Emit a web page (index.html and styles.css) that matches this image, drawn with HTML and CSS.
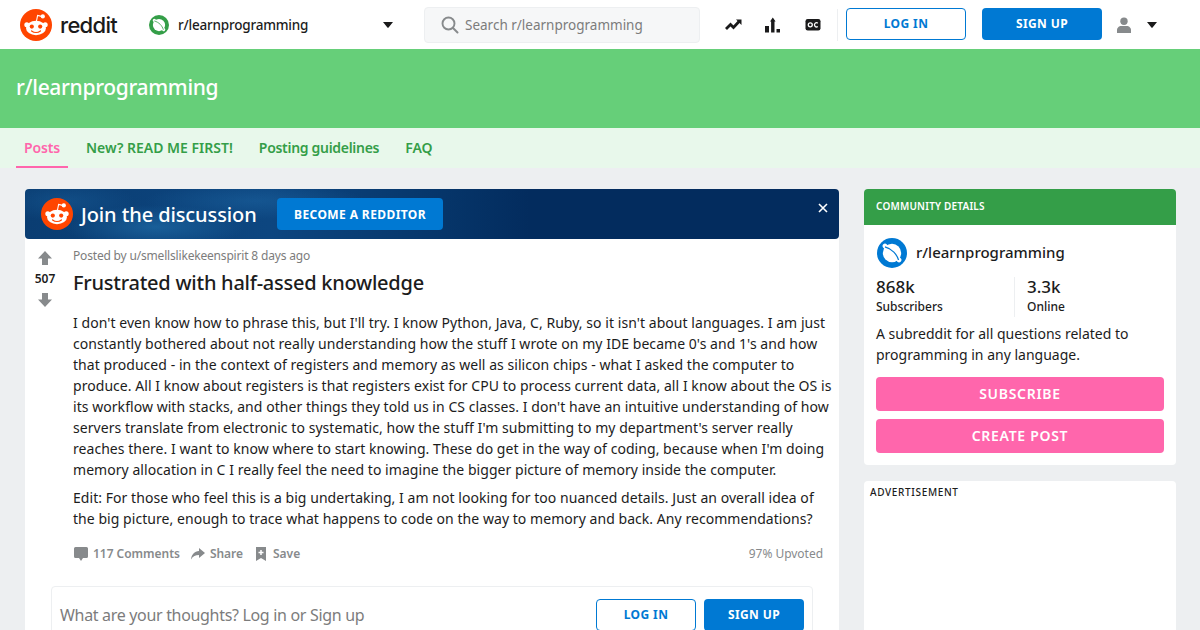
FILE: index.html
```html
<!DOCTYPE html>
<html lang="en">
<head>
<meta charset="utf-8">
<title>r/learnprogramming</title>
<link rel="stylesheet" href="styles.css">
</head>
<body>
<svg class="defs" width="0" height="0">
  <defs>
    <symbol id="snoo" viewBox="0 0 32 32">
      <circle cx="16" cy="16" r="16" fill="#ff4500"/>
      <circle cx="22.800" cy="7.400" r="2.100" fill="#fff"/>
      <path d="M16.400 12.500 17.600 6.400l4.200 1" fill="none" stroke="#fff" stroke-width="1.100"/>
      <ellipse cx="16" cy="19" rx="10" ry="7.200" fill="#fff"/>
      <circle cx="6.800" cy="15.800" r="2.500" fill="#fff"/>
      <circle cx="25.200" cy="15.800" r="2.500" fill="#fff"/>
      <circle cx="11.800" cy="17.600" r="2.100" fill="#ff4500"/>
      <circle cx="20.200" cy="17.600" r="2.100" fill="#ff4500"/>
      <path d="M11.600 22c2.500 1.900 6.300 1.900 8.800 0" fill="none" stroke="#ff4500" stroke-width="1.300" stroke-linecap="round"/>
    </symbol>
    <symbol id="planet" viewBox="0 0 32 32">
      <circle cx="16" cy="16" r="16" fill="currentColor"/>
      <circle cx="16" cy="16" r="9.800" fill="#fff"/>
      <path d="M8.500 8.500 23.500 23.500" stroke="#fff" stroke-width="5" stroke-linecap="round"/>
      <path d="M8.500 9.500C12 10.500 15.500 12.500 18 15S22 20.500 23 23.500" fill="none" stroke="currentColor" stroke-width="1.300"/>
    </symbol>
    <symbol id="caret" viewBox="0 0 10 6"><path d="M0 0h10L5.800 5.300a1 1 0 0 1-1.600 0Z" fill="currentColor"/></symbol>
    <symbol id="up" viewBox="0 0 14 14"><path d="M7 0 14 7.500H10V14H4V7.500H0Z" fill="currentColor"/></symbol>
    <symbol id="down" viewBox="0 0 14 14"><path d="M7 14 0 6.500H4V0H10V6.500H14Z" fill="currentColor"/></symbol>
  </defs>
</svg>

<header class="topbar">
  <a class="brand">
    <svg class="brand-icon"><use href="#snoo"/></svg>
    <span class="wordmark">reddit</span>
  </a>
  <div class="switcher">
    <svg class="switcher-icon"><use href="#planet"/></svg>
    <span class="switcher-name">r/learnprogramming</span>
    <svg class="caret"><use href="#caret"/></svg>
  </div>
  <div class="search">
    <svg class="search-icon" viewBox="0 0 18 18"><circle cx="7.500" cy="7.500" r="6" fill="none" stroke="currentColor" stroke-width="1.900"/><path d="m12 12 4.500 4.500" stroke="currentColor" stroke-width="2" stroke-linecap="round"/></svg>
    <span>Search r/learnprogramming</span>
  </div>
  <nav class="top-icons">
    <svg class="top-icon trend-icon" viewBox="0 0 17 12"><path d="M1 10 5.500 5.500l3 3 6-6.500" fill="none" stroke="currentColor" stroke-width="2.800"/><path d="M11 .5H16.500V6Z" fill="currentColor"/></svg>
    <svg class="top-icon" viewBox="0 0 16 16"><path d="M0 9h4v6.500H0ZM5 4.500 7.800.5l2.800 4H9.500v11h-3.400V4.500ZM11.500 12h3.500v3.500h-3.500Z" fill="currentColor"/></svg>
    <svg class="top-icon" viewBox="0 0 16 12"><rect x=".5" width="15" height="11.500" rx="2.200" fill="currentColor"/><circle cx="5.300" cy="5.800" r="2" fill="none" stroke="#fff" stroke-width="1.300"/><path d="M12.800 4.100a2.100 2.100 0 1 0 0 3.400" fill="none" stroke="#fff" stroke-width="1.300"/></svg>
  </nav>
  <a class="btn btn-outline top-login">LOG IN</a>
  <a class="btn btn-solid top-signup">SIGN UP</a>
  <div class="user-menu">
    <svg class="user-icon" viewBox="0 0 16 16"><circle cx="8" cy="4.300" r="3.700" fill="currentColor"/><path d="M1 16v-3c0-2.500 2.500-4 4-4h6c1.500 0 4 1.500 4 4v3Z" fill="currentColor"/></svg>
    <svg class="caret"><use href="#caret"/></svg>
  </div>
</header>

<section class="banner"><h1>r/learnprogramming</h1></section>

<nav class="subnav">
  <a class="subnav-item active">Posts</a>
  <a class="subnav-item">New? READ ME FIRST!</a>
  <a class="subnav-item narrow">Posting guidelines</a>
  <a class="subnav-item">FAQ</a>
</nav>

<main class="content">
  <div class="main-col">
    <div class="join">
      <svg class="join-icon"><use href="#snoo"/></svg>
      <span class="join-text">Join the discussion</span>
      <a class="btn join-btn">BECOME A REDDITOR</a>
      <svg class="join-close" viewBox="0 0 10 10"><path d="m1 1 8 8M9 1 1 9" stroke="currentColor" stroke-width="1.600"/></svg>
    </div>
    <article class="post">
      <div class="votes">
        <svg class="vote"><use href="#up"/></svg>
        <span class="score">507</span>
        <svg class="vote"><use href="#down"/></svg>
      </div>
      <div class="post-body">
        <p class="meta">Posted by u/smellslikekeenspirit 8 days ago</p>
        <h2 class="title">Frustrated with half-assed knowledge</h2>
        <p class="text">I don't even know how to phrase this, but I'll try. I know Python, Java, C, Ruby, so it isn't about languages. I am just constantly bothered about not really understanding how the stuff I wrote on my IDE became 0's and 1's and how that produced - in the context of registers and memory as well as silicon chips - what I asked the computer to produce. All I know about registers is that registers exist for CPU to process current data, all I know about the OS is its workflow with stacks, and other things they told us in CS classes. I don't have an intuitive understanding of how servers translate from electronic to systematic, how the stuff I'm submitting to my department's server really reaches there. I want to know where to start knowing. These do get in the way of coding, because when I'm doing memory allocation in C I really feel the need to imagine the bigger picture of memory inside the computer.</p>
        <p class="text">Edit: For those who feel this is a big undertaking, I am not looking for too nuanced details. Just an overall idea of the big picture, enough to trace what happens to code on the way to memory and back. Any recommendations?</p>
        <div class="actions">
          <span class="action"><svg class="action-icon" viewBox="0 0 14 14"><path d="M1.500 0h11A1.500 1.500 0 0 1 14 1.500v8a1.500 1.500 0 0 1-1.500 1.500H9l-2 3-2-3H1.500A1.500 1.500 0 0 1 0 9.500v-8A1.500 1.500 0 0 1 1.500 0Z" fill="currentColor"/></svg>117 Comments</span>
          <span class="action"><svg class="action-icon" viewBox="0 0 14 14"><path d="M8 1l6 5-6 5V8C4.500 8 2 9 0 12.500 .5 7.500 3.500 4.200 8 4Z" fill="currentColor"/></svg>Share</span>
          <span class="action"><svg class="action-icon" viewBox="0 0 14 14"><path d="M2 0h10v14l-5-3-5 3Z" fill="currentColor"/><path d="M7 3v5M4.500 5.500h5" stroke="#fff" stroke-width="1.500"/></svg>Save</span>
          <span class="upvoted">97% Upvoted</span>
        </div>
      </div>
    </article>
    <div class="comment-wrap">
      <div class="comment-box">
        <span class="comment-prompt">What are your thoughts? Log in or Sign up</span>
        <a class="btn btn-outline comment-login">LOG IN</a>
        <a class="btn btn-solid comment-signup">SIGN UP</a>
      </div>
    </div>
  </div>

  <aside class="side-col">
    <section class="card details">
      <h3 class="details-head">COMMUNITY DETAILS</h3>
      <div class="details-body">
        <div class="community">
          <svg class="community-icon"><use href="#planet"/></svg>
          <span class="community-name">r/learnprogramming</span>
        </div>
        <div class="stats">
          <div class="stat"><strong>868k</strong><span>Subscribers</span></div>
          <div class="stat"><strong>3.3k</strong><span>Online</span></div>
        </div>
        <p class="about">A subreddit for all questions related to programming in any language.</p>
        <a class="btn-pink">SUBSCRIBE</a>
        <a class="btn-pink">CREATE POST</a>
      </div>
    </section>
    <section class="card ad"><span class="ad-label">ADVERTISEMENT</span></section>
  </aside>
</main>
</body>
</html>
```

FILE: styles.css
```css
* { box-sizing: border-box; }
html, body { margin: 0; height: 630px; overflow: hidden; }
body { background: #edeff1; font-family: "Noto Sans", sans-serif; color: #1c1c1c; }
.defs { position: absolute; }
h1, h2, h3, p { margin: 0; }

.topbar { height: 49px; background: #fff; display: flex; align-items: center; padding-left: 20px; }
.brand { display: flex; align-items: center; width: 129px; }
.brand-icon { width: 32px; height: 32px; }
.wordmark { font: 500 22px/32px "Inter", sans-serif; letter-spacing: -0.7px; margin-left: 8px; color: #1a1a1b; }
.switcher { display: flex; align-items: center; width: 275px; }
.switcher-icon { width: 20px; height: 20px; color: #349e48; margin-right: 9px; }
.switcher-name { font: 500 13.500px/18px "Noto Sans", sans-serif; letter-spacing: -.2px; width: 205px; }
.caret { width: 10px; height: 6px; color: #1a1a1b; }
.search { width: 276px; height: 36px; background: #f6f7f8; border: 1px solid #edeff1; border-radius: 4px; display: flex; align-items: center; padding-left: 16px; font-size: 13.500px; color: #7c7c7c; }
.search-icon { width: 18px; height: 18px; color: #878a8c; margin-right: 6px; }
.top-icons { display: flex; align-items: center; gap: 24px; width: 138px; height: 32px; padding-left: 25px; border-right: 1px solid #edeff1; margin-right: 8px; }
.top-icon { width: 16px; height: 16px; color: #1a1a1b; flex: none; }
.trend-icon { width: 17px; margin-right: -1px; }
.btn { display: flex; align-items: center; justify-content: center; font: 700 12px/1 "Noto Sans", sans-serif; letter-spacing: .4px; border-radius: 4px; }
.btn-outline { border: 1px solid #0079d3; color: #0079d3; background: #fff; }
.btn-solid { background: #0079d3; color: #fff; }
.top-login { width: 120px; height: 32px; margin-bottom: 1px; }
.top-signup { width: 120px; height: 32px; margin: 0 0 1px 16px; }
.user-menu { display: flex; align-items: center; margin-left: 14px; gap: 15px; }
.user-icon { width: 16px; height: 16px; color: #878a8c; }

.banner { height: 79px; background: #66cf79; display: flex; align-items: center; padding: 0 0 4px 16px; }
.banner h1 { font: 500 21px/28px "Noto Sans", sans-serif; letter-spacing: -.33px; color: #fff; }

.subnav { height: 40px; background: #e8f8eb; display: flex; padding-left: 16px; gap: 10px; }
.subnav-item { font: 600 14px/18px "Noto Sans", sans-serif; color: #349e48; padding: 11px 8px 0; height: 40px; }
.subnav-item.active { color: #ff66ac; border-bottom: 2px solid #ff66ac; letter-spacing: -.15px; }
.subnav-item.narrow { letter-spacing: -.3px; }

.content { display: flex; padding: 21px 24px 0 25px; gap: 25px; }
.main-col { width: 814px; background: #fff; border-radius: 4px 4px 0 0; }
.join { height: 50px; border-radius: 4px; display: flex; align-items: center; padding-left: 16px; position: relative; color: #fff;
  background:
    radial-gradient(ellipse 90px 22px at 130px 38px, rgba(36,118,178,.55), transparent),
    radial-gradient(ellipse 110px 18px at 230px 12px, rgba(30,104,165,.45), transparent),
    radial-gradient(ellipse 70px 20px at 40px 12px, rgba(28,100,160,.4), transparent),
    linear-gradient(90deg, #0a3d72 0%, #0d4680 30%, #07386d 48%, #032c5e 62%, #032c5e 100%); }
.join-icon { width: 32px; height: 32px; }
.join-text { font: 500 20px/26px "Noto Sans", sans-serif; letter-spacing: -.1px; margin: 2px 0 0 8px; width: 196px; }
.join-btn { width: 166px; height: 32px; background: #0079d3; color: #fff; padding-top: 1px; }
.join-close { position: absolute; right: 11px; top: 14px; width: 10px; height: 10px; color: #fff; }

.post { display: flex; }
.votes { width: 40px; display: flex; flex-direction: column; align-items: center; padding-top: 12px; margin-right: 8px; flex: none; }
.vote { width: 14px; height: 14px; color: #878a8c; }
.score { font: 600 12px/16px "Noto Sans", sans-serif; margin: 6px 0; }
.post-body { width: 764px; padding-top: 9px; }
.meta { font-size: 12px; line-height: 16px; letter-spacing: -.18px; color: #7c7c7c; }
.title { font: 500 20px/26px "Noto Sans", sans-serif; letter-spacing: -.25px; margin: 6px 0 16px; color: #1c1c1c; }
.text { font-size: 14px; line-height: 21px; letter-spacing: .05px; margin-bottom: 7px; }
.actions { display: flex; align-items: center; height: 24px; margin-top: 13px; padding: 0 14px 0 1px; font: 600 12px/16px "Noto Sans", sans-serif; letter-spacing: -.03px; color: #878a8c; }
.action { display: flex; align-items: center; margin-right: 11px; }
.action-icon { width: 14px; height: 14px; margin-right: 5px; }
.upvoted { margin-left: auto; font-weight: 400; color: #878a8c; }

.comment-wrap { padding: 20px 26px 0; }
.comment-box { height: 60px; border: 1px solid #edeff1; border-radius: 4px; display: flex; align-items: flex-start; padding: 12px 8px 0; }
.comment-prompt { font-size: 16px; line-height: 32px; letter-spacing: -.32px; color: #7c7c7c; flex: 1; }
.comment-login { width: 100px; height: 32px; }
.comment-signup { width: 100px; height: 32px; margin-left: 8px; }

.side-col { width: 312px; flex: none; display: flex; flex-direction: column; gap: 16px; }
.card { background: #fff; border-radius: 4px; }
.details-head { height: 36px; background: #349e48; color: #fff; border-radius: 4px 4px 0 0; font: 600 10px/35px "Noto Sans", sans-serif; letter-spacing: .2px; padding-left: 12px; }
.details-body { padding: 12px; }
.community { display: flex; align-items: center; height: 32px; font: 500 15px/20px "Noto Sans", sans-serif; gap: 9px; margin-left: 1px; }
.community-name { margin-bottom: 2px; }
.community-icon { width: 30px; height: 30px; color: #0079d3; }
.stats { display: flex; margin-top: 8px; }
.stat { display: flex; flex-direction: column; width: 138px; height: 40px; }
.stat + .stat { border-left: 1px solid #edeff1; padding-left: 12px; }
.stat strong { font: 500 17px/20px "Noto Sans", sans-serif; }
.stat span { font: 500 12px/16px "Noto Sans", sans-serif; margin-top: 2px; }
.about { font-size: 14px; line-height: 21px; margin-top: 6px; }
.btn-pink { display: flex; align-items: center; justify-content: center; height: 34px; background: #ff66ac; color: #fff; border-radius: 4px; font: 600 14px/1 "Noto Sans", sans-serif; letter-spacing: .7px; margin-top: 8px; }
.about + .btn-pink { margin-top: 12px; }
.ad { height: 300px; padding: 5px 6px; }
.ad-label { display: block; font: 500 10px/12px "Noto Sans", sans-serif; letter-spacing: .65px; }
```
